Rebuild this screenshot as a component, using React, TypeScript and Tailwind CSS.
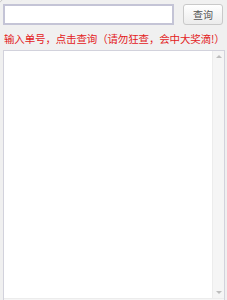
import { useState } from 'react'

export default function App() {
  const [code, setCode] = useState('')

  return (
    <div
      className="relative h-[300px] w-[227px] overflow-hidden bg-[#f0f0f0]"
      style={{ fontFamily: '"Noto Sans CJK SC", "Liberation Sans", sans-serif' }}
    >
      <div className="absolute -left-[7px] -top-[7px] h-[10px] w-[10px] rounded-full border border-[#c8c8c8]" />
      <div className="flex items-center gap-[9px] pl-[3px] pt-[4px]">
        <input
          className="h-[21px] w-[171px] border-2 border-[#c4c4d6] bg-white px-1 text-[12px] outline-none"
          value={code}
          onChange={(event) => setCode(event.target.value)}
        />
        <button
          type="button"
          className="flex h-[21px] w-[40px] items-center justify-center rounded-[3px] border border-[#c9c9c9] bg-gradient-to-b from-white to-[#ececec] text-[10px] leading-none text-[#555]"
        >
          查询
        </button>
      </div>
      <p className="mt-[7px] whitespace-nowrap pl-[4px] text-[10.5px] leading-[14px] tracking-[-0.15px] text-[#e3201b]">
        输入单号，点击查询（请勿狂查，会中大奖滴!）
      </p>
      <div className="ml-[3px] mt-[4px] flex h-[260px] w-[222px] flex-col border border-[#d2d2dc] bg-white">
        <div className="flex flex-1">
          <div className="flex-1" />
          <div className="flex w-[12px] flex-col items-center border-l border-[#ececec] bg-[#f5f5f5]">
            <span className="mt-[4px] h-0 w-0 border-x-[3px] border-b-[3px] border-x-transparent border-b-[#bdbdbd]" />
            <div className="flex-1" />
            <span className="mb-[4px] h-0 w-0 border-x-[3px] border-t-[3px] border-x-transparent border-t-[#bdbdbd]" />
          </div>
        </div>
        <div className="flex h-[11px] items-center border-t border-[#ececec] bg-[#f5f5f5]">
          <span className="ml-[4px] h-0 w-0 border-y-[3px] border-r-[3px] border-y-transparent border-r-[#bdbdbd]" />
          <div className="flex-1" />
          <span className="mr-[16px] h-0 w-0 border-y-[3px] border-l-[3px] border-y-transparent border-l-[#bdbdbd]" />
        </div>
      </div>
    </div>
  )
}
